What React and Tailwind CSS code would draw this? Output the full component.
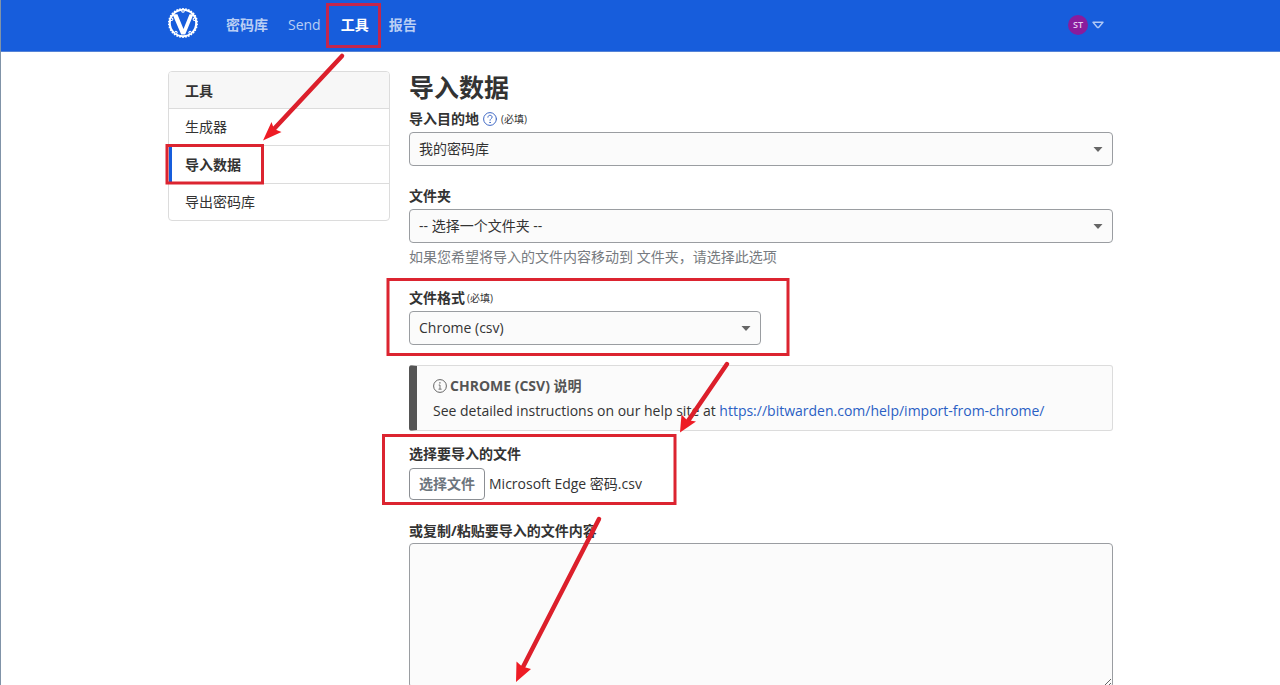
import { useRef, useState } from "react";

const NAV = ["密码库", "Send", "工具", "报告"];
const TOOLS = ["生成器", "导入数据", "导出密码库"];
const TEETH = Array.from({ length: 30 }, (_, i) => i * 12);
const BOLTS = [18, 90, 162, 234, 306];

function Logo() {
  return (
    <svg viewBox="0 0 32 32" className="size-8" role="img" aria-label="Vaultwarden">
      <g fill="none" stroke="#fff">
        <circle cx="16" cy="16" r="13.2" strokeWidth="2" />
        {TEETH.map((a) => (
          <path key={a} d="M16 1V3" strokeWidth="1.6" transform={`rotate(${a} 16 16)`} />
        ))}
      </g>
      {BOLTS.map((a) => (
        <circle key={a} cx="27.8" cy="16" r="1.6" fill="#fff" transform={`rotate(${a + 180} 16 16)`} />
      ))}
      {BOLTS.map((a) => (
        <circle key={a} cx="28" cy="16" r="0.7" fill="#175ddc" transform={`rotate(${a + 180} 16 16)`} />
      ))}
      <path d="M5.500 7.200H10.400L16.500 22L22.500 7.200H26.500L18.200 27.400H14.200Z" fill="#fff" />
    </svg>
  );
}

function Select({ id, children }) {
  return (
    <div className="relative">
      <select
        id={id}
        className="block h-[34px] w-full appearance-none rounded-[4px] border border-[#9a9da1] bg-[#fbfbfb] pr-8 pl-[9px] text-sm text-[#333]"
      >
        {children}
      </select>
      <svg viewBox="0 0 10 5" className="pointer-events-none absolute top-[15px] right-[10px] h-[5px] w-[10px]">
        <path d="M0.5 0H9.5L5 5Z" fill="#666" />
      </svg>
    </div>
  );
}

function Label({ htmlFor, children }) {
  return (
    <label htmlFor={htmlFor} className="text-sm leading-5 font-bold text-[#333]">
      {children}
    </label>
  );
}

function Required() {
  return <small className="text-[10px] font-normal">(必填)</small>;
}

function Annotations() {
  return (
    <svg
      className="pointer-events-none absolute top-0 left-0 h-[685px] w-[945px] overflow-visible"
      viewBox="168 0 945 685"
      aria-hidden="true"
    >
      <g fill="none" stroke="#dc2430" strokeWidth="3">
        <rect x="327.5" y="4.5" width="52" height="42" stroke="#c3264c" />
        <rect x="167" y="145.5" width="95.5" height="37.5" />
        <rect x="388" y="279.5" width="400" height="75" />
        <rect x="383.5" y="435.5" width="291.5" height="68" />
      </g>
      <g stroke="#dc1f2b" strokeWidth="4.5" strokeLinecap="round">
        <path d="M342 56L273 130" />
        <path d="M727 364L688 421" />
        <path d="M599 519L523 667" />
      </g>
      <g fill="#ee1c25">
        <path d="M263 140.500L271.500 122L274 129L281.500 132Z" />
        <path d="M680 432.500L681.500 414.500L687 420L696 421.500Z" />
        <path d="M516 682L516.500 661.500L522 666.500L531 669Z" />
      </g>
    </svg>
  );
}

export default function App() {
  const fileRef = useRef(null);
  const [fileName, setFileName] = useState("Microsoft Edge 密码.csv");

  return (
    <div className="relative border-l border-[#8093a8] bg-white font-['Open_Sans','Noto_Sans_CJK_SC',sans-serif] text-sm text-[#333]">
      <header className="border-b border-[#5583d6] bg-[#175ddc]">
        <div className="mx-auto flex h-[51px] max-w-[945px] items-center pb-[5px]">
          <a href="#home" className="-ml-px">
            <Logo />
          </a>
          <nav className="ml-[27px] flex items-center gap-5 pt-1">
            {NAV.map((item) => (
              <a
                key={item}
                href={`#${item}`}
                className={item === "工具" ? "font-bold text-white" : item === "Send" ? "text-[#b9cef4]" : "font-bold text-[#b9cef4]"}
              >
                {item}
              </a>
            ))}
          </nav>
          <button type="button" aria-label="账户" className="mr-[9px] ml-auto flex items-center gap-1 pt-1">
            <span className="flex size-5 items-center justify-center rounded-full bg-[#8a1c9c] text-[9px] font-semibold text-[#e6cdf0]">ST</span>
            <svg viewBox="0 0 12 8" className="h-2 w-3" fill="none">
              <path d="M1 1.200H11L6.800 6.200Q6 7 5.200 6.200Z" stroke="#b0c8f5" strokeWidth="1.400" strokeLinejoin="round" />
            </svg>
          </button>
        </div>
      </header>

      <div className="mx-auto flex max-w-[945px] items-start gap-[19px] pt-[19px]">
        <aside className="w-[222px] shrink-0 overflow-hidden rounded-[4px] border border-[#dcdcdc]">
          <h2 className="flex h-9 items-center bg-[#f7f7f7] px-4 pt-[2px] font-bold">工具</h2>
          <ul>
            {TOOLS.map((item) => (
              <li key={item} className="border-t border-[#dcdcdc]">
                <a
                  href={`#${item}`}
                  className={
                    item === "导入数据"
                      ? "flex h-[37px] items-center border-l-3 border-[#175ddc] pl-[13px] font-bold"
                      : "flex h-9 items-center pl-4"
                  }
                >
                  {item}
                </a>
              </li>
            ))}
          </ul>
        </aside>

        <main className="min-w-0 flex-1">
          <h1 className="text-[25px] leading-8 font-bold">导入数据</h1>
          <form>
            <div className="mt-[6px] mb-[3px] flex h-5 items-center gap-1">
              <Label htmlFor="target">导入目的地</Label>
              <a href="#help" aria-label="帮助">
                <svg viewBox="0 0 14 14" className="size-[14px]" fill="none" stroke="#3f68c4" strokeLinecap="round">
                  <circle cx="7" cy="7" r="6.400" strokeWidth="1" />
                  <path d="M4.900 5.200C5 3.900 5.900 3.300 7 3.300C8.200 3.300 9.100 4 9.100 5.100C9.100 6.700 7 6.600 7 8.300" strokeWidth="1" />
                  <circle cx="7" cy="10.400" r="0.300" />
                </svg>
              </a>
              <Required />
            </div>
            <Select id="target">
              <option>我的密码库</option>
            </Select>

            <div className="mt-[20px] mb-[3px] flex h-5 items-center">
              <Label htmlFor="folder">文件夹</Label>
            </div>
            <Select id="folder">
              <option>-- 选择一个文件夹 --</option>
            </Select>
            <p className="mt-1 leading-5 text-[#777b80]">如果您希望将导入的文件内容移动到 文件夹，请选择此选项</p>

            <div className="mt-[21px] mb-[3px] flex h-5 items-center gap-[2px]">
              <Label htmlFor="format">文件格式</Label>
              <Required />
            </div>
            <div className="w-1/2">
              <Select id="format">
                <option>Chrome (csv)</option>
              </Select>
            </div>

            <section className="mt-5 rounded-[3px] border border-l-8 border-[#dcdcdc] border-l-[#555] bg-[#fbfbfb] px-4 pt-2 pb-[7px]">
              <h3 className="flex h-6 items-center gap-[3px] font-bold text-[#555]">
                <svg viewBox="0 0 14 14" className="size-[14px]" fill="none" stroke="#555">
                  <circle cx="7" cy="7" r="6.400" strokeWidth="0.900" />
                  <path d="M5.700 6H7V10M5.500 10.200H8.600" strokeWidth="0.800" />
                  <path d="M6.900 3.200V4.400" strokeWidth="1.200" />
                </svg>
                CHROME (CSV) 说明
              </h3>
              <p className="pt-px leading-6">
                See detailed instructions on our help site at{" "}
                <a href="https://bitwarden.com/help/import-from-chrome/" className="text-[#2a5fc4]">
                  https://bitwarden.com/help/import-from-chrome/
                </a>
              </p>
            </section>

            <div className="mt-[13px] mb-1 flex h-5 items-center">
              <Label htmlFor="file">选择要导入的文件</Label>
            </div>
            <div className="flex items-center gap-1">
              <button
                type="button"
                onClick={() => fileRef.current.click()}
                className="h-8 rounded-[4px] border border-[#8c8f94] bg-white px-[9px] font-bold text-[#6c757d]"
              >
                选择文件
              </button>
              <span>{fileName}</span>
              <input
                ref={fileRef}
                id="file"
                type="file"
                className="hidden"
                onChange={(e) => e.target.files[0] && setFileName(e.target.files[0].name)}
              />
            </div>

            <div className="mt-[21px] mb-[2px] flex h-5 items-center">
              <Label htmlFor="contents">或复制/粘贴要导入的文件内容</Label>
            </div>
            <textarea
              id="contents"
              className="block h-[145px] w-full resize rounded-[4px] border border-[#9a9da1] bg-[#fbfbfb] px-[9px] py-1"
            />
          </form>
        </main>
      </div>

      <div className="pointer-events-none absolute inset-x-0 top-0">
        <div className="relative mx-auto max-w-[945px]">
          <Annotations />
        </div>
      </div>
    </div>
  );
}
